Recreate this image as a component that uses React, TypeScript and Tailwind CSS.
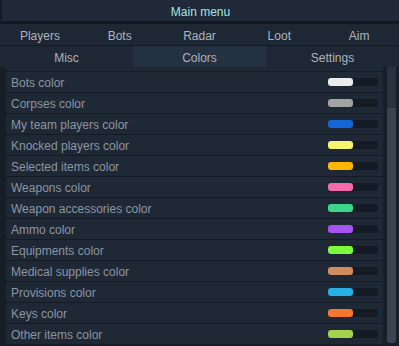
import React from "react"

const tabsTop = ["Players", "Bots", "Radar", "Loot", "Aim"]
const tabsBottom = ["Misc", "Colors", "Settings"]

const colors = [
  { name: "Bots color", c: "bg-[#ebebeb]" },
  { name: "Corpses color", c: "bg-[#a3a3a3]" },
  { name: "My team players color", c: "bg-[#1466d6]" },
  { name: "Knocked players color", c: "bg-[#f6f66e]" },
  { name: "Selected items color", c: "bg-[#ffb508]" },
  { name: "Weapons color", c: "bg-[#f26ca8]" },
  { name: "Weapon accessories color", c: "bg-[#3cd68a]" },
  { name: "Ammo color", c: "bg-[#a454f0]" },
  { name: "Equipments color", c: "bg-[#7cfb3c]" },
  { name: "Medical supplies color", c: "bg-[#d38a5c]" },
  { name: "Provisions color", c: "bg-[#26b0e6]" },
  { name: "Keys color", c: "bg-[#f5762e]" },
  { name: "Other items color", c: "bg-[#a2d24e]" },
]

export default function App() {
  return (
    <div className="w-[399px] h-[346px] overflow-hidden bg-[#161e28] font-['Liberation_Sans',Arial,sans-serif] text-[12px] leading-none">

      <div className="h-[21px] pt-[2px] flex items-center justify-center bg-[#1f2937] border-l-2 border-[#151c25] text-[#a4e4e4]">
        Main menu
      </div>

      <div className="h-[3px] bg-[#121922]" />

      <div className="grid grid-cols-5 h-[22px] bg-[#1e2834] border-b border-[#141b24] text-[#abb4bf]">
        {tabsTop.map((t) => (
          <div key={t} className="flex items-center justify-center pt-[2px]">{t}</div>
        ))}
      </div>

      <div className="grid grid-cols-3 h-[21px] bg-[#1e2834] text-[#abb4bf]">
        {tabsBottom.map((t) => (
          <div
            key={t}
            className={
              t === "Colors"
                ? "flex items-center justify-center pt-[2px] bg-[#243140]"
                : "flex items-center justify-center pt-[2px]"
            }
          >
            {t}
          </div>
        ))}
      </div>

      <div className="flex h-[279px]">
        <div className="flex-1 overflow-hidden pl-[6px] pr-[4px]">
          {/* list is scrolled: only the bottom of the first row shows */}
          <div className="h-[5px] bg-[#1f2835] border-b border-[#141b24]" />
          {colors.map((row) => (
            <div
              key={row.name}
              className="h-[21px] flex items-center justify-between bg-[#1f2835] border-b border-[#141b24] pl-[5px] pr-[5px] text-[#8b96a3]"
            >
              <span className="pt-[2px]">{row.name}</span>
              <div className="w-[50px] h-[8px] rounded-[3px] bg-[#141b25] flex">
                <div className={"w-[25px] h-[8px] rounded-[3px] " + row.c} />
              </div>
            </div>
          ))}
        </div>

        <div className="w-[9px] h-[276px] mr-[3px] bg-[#29323f] rounded-b-[3px] flex flex-col justify-end">
          <div className="h-[235px] bg-[#3a4453] rounded-[3px]" />
        </div>
      </div>

    </div>
  )
}
